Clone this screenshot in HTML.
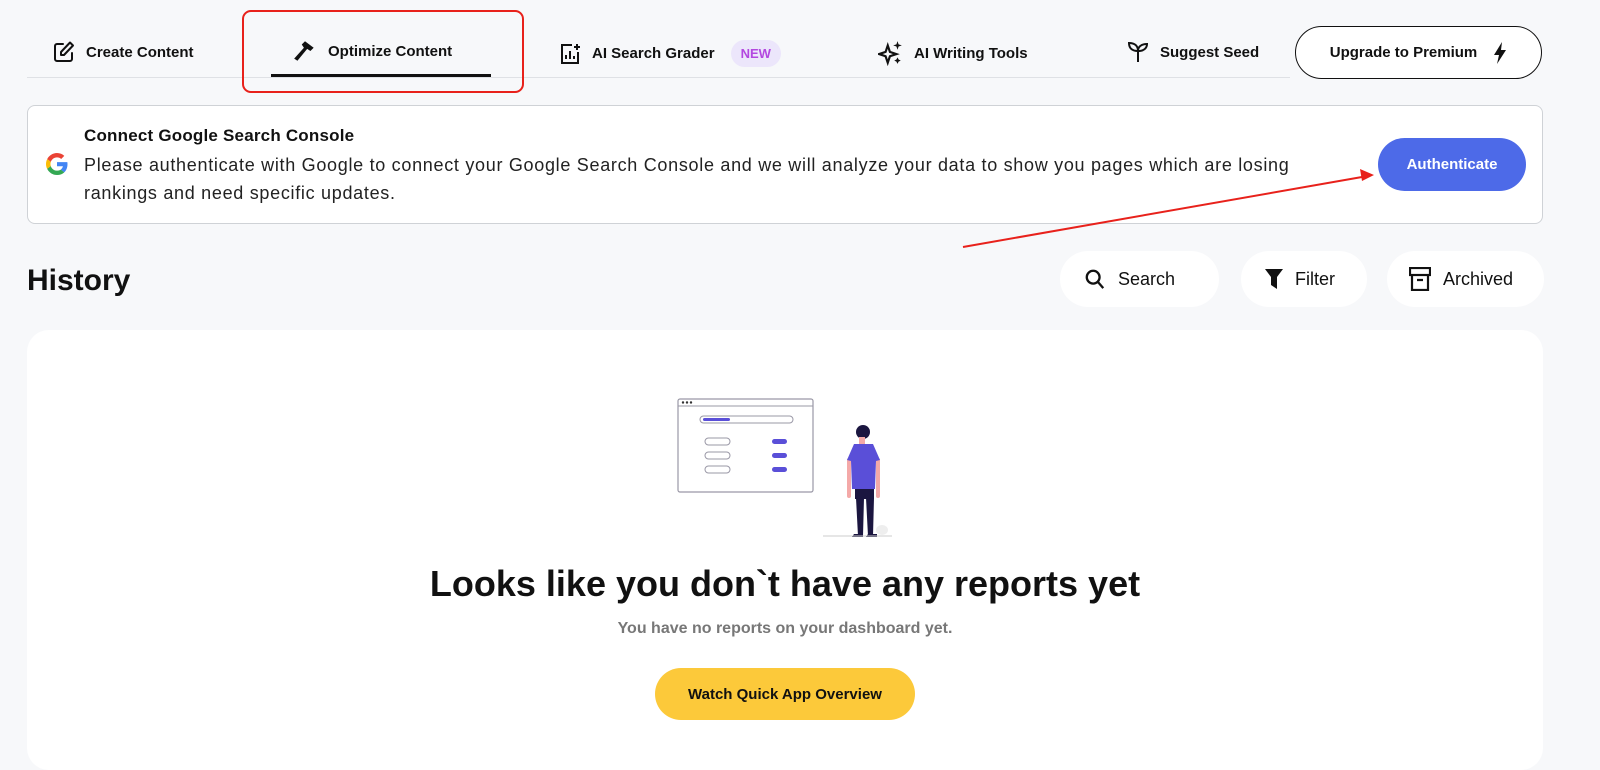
<!DOCTYPE html>
<html><head><style>
*{box-sizing:border-box;margin:0;padding:0}
body{width:1600px;height:753px;background:#f7f8fa;font-family:"Liberation Sans",sans-serif;color:#111;position:relative;overflow:hidden}
.a{position:absolute}
.nav{font-size:15px;font-weight:bold;display:flex;align-items:center;gap:10px}
.pill{background:#fff;border-radius:28px;height:56px;display:flex;align-items:center;gap:12px;font-size:18px;padding:0 24px}
</style></head><body>
<div class="a" style="left:27px;top:77px;width:1263px;height:1px;background:#dfe1e5"></div>
<div class="a nav" style="left:52px;top:40px"><svg width="24" height="24" viewBox="0 0 24 24" fill="none" stroke="#111" stroke-width="2" stroke-linecap="round" stroke-linejoin="round"><path d="M11 4H5a2 2 0 0 0-2 2v13a2 2 0 0 0 2 2h13a2 2 0 0 0 2-2v-6"/><path d="M18 2.5l3 3L12 15H9v-3z"/></svg>Create Content</div>
<div class="a nav" style="left:292px;top:38px"><svg width="26" height="26" viewBox="0 0 24 24"><path d="M12 3l8 6-3 3-3-2-9 11-3-2 9-10-2-3z" fill="#111"/></svg>Optimize Content</div>
<div class="a" style="left:271px;top:74px;width:220px;height:3px;background:#111"></div>
<div class="a" style="left:242px;top:10px;width:282px;height:83px;border:2px solid #e8211b;border-radius:9px"></div>
<div class="a nav" style="left:558px;top:40px"><svg width="24" height="24" viewBox="0 0 24 24" fill="none" stroke="#111" stroke-width="2"><path d="M14 3H4v18h16V10"/><path d="M8 17v-4M12 17V9M16 17v-3M19 2v6M16 5h6"/></svg>AI Search Grader<span style="background:#ece6fb;color:#b347e0;border-radius:14px;padding:6px 10px;font-size:13px;margin-left:6px">NEW</span></div>
<div class="a nav" style="left:878px;top:40px"><svg width="26" height="26" viewBox="0 0 24 24" fill="#111"><path d="M9 5l2 6 6 2-6 2-2 6-2-6-6-2 6-2z" fill="none" stroke="#111" stroke-width="2"/><path d="M18 1l1 3 3 1-3 1-1 3-1-3-3-1 3-1zM18 16l1 2 2 1-2 1-1 2-1-2-2-1 2-1z"/></svg>AI Writing Tools</div>
<div class="a nav" style="left:1126px;top:40px"><svg width="24" height="24" viewBox="0 0 24 24" fill="none" stroke="#111" stroke-width="2"><path d="M12 22V11M12 11C12 6 9 3 3 3c0 5 3 8 9 8zM12 11c0-4 3-7 9-7 0 4-3 7-9 7"/></svg>Suggest Seed</div>
<div class="a" style="left:1295px;top:26px;width:247px;height:53px;border:1.5px solid #111;border-radius:27px;background:#fff;display:flex;align-items:center;justify-content:center;gap:16px;font-size:15px;font-weight:bold">Upgrade to Premium<svg width="14" height="22" viewBox="0 0 14 22"><path d="M9 0L1 13h5l-2 9 9-14H8z" fill="#111"/></svg></div>

<div class="a" style="left:27px;top:105px;width:1516px;height:119px;background:#fff;border:1px solid #cfd2d6;border-radius:8px"></div>
<div class="a" style="left:46px;top:153px"><svg width="22" height="22" viewBox="0 0 48 48"><path fill="#EA4335" d="M24 9.5c3.5 0 6.6 1.2 9.1 3.6l6.8-6.8C35.8 2.4 30.3 0 24 0 14.6 0 6.6 5.4 2.6 13.3l7.9 6.1C12.4 13.7 17.7 9.5 24 9.5z"/><path fill="#4285F4" d="M46.9 24.5c0-1.6-.1-3.1-.4-4.5H24v9h12.9c-.6 3-2.3 5.5-4.8 7.2l7.7 6c4.5-4.2 7.1-10.3 7.1-17.7z"/><path fill="#FBBC05" d="M10.5 28.6c-.5-1.5-.8-3-.8-4.6s.3-3.1.8-4.6l-7.9-6.1C.9 16.6 0 20.2 0 24s.9 7.4 2.6 10.7z"/><path fill="#34A853" d="M24 48c6.5 0 11.9-2.1 15.9-5.8l-7.7-6c-2.2 1.5-5 2.3-8.2 2.3-6.3 0-11.6-4.2-13.5-10l-7.9 6.1C6.6 42.6 14.6 48 24 48z"/></svg></div>
<div class="a" style="left:84px;top:126px;font-size:17px;font-weight:bold;letter-spacing:0.2px">Connect Google Search Console</div>
<div class="a" style="left:84px;top:151px;font-size:18px;line-height:28px;color:#222;letter-spacing:0.7px;white-space:nowrap">Please authenticate with Google to connect your Google Search Console and we will analyze your data to show you pages which are losing<br>rankings and need specific updates.</div>
<div class="a" style="left:1378px;top:138px;width:148px;height:53px;border-radius:27px;background:#4d6ae8;color:#fff;font-weight:bold;font-size:15px;display:flex;align-items:center;justify-content:center">Authenticate</div>
<svg class="a" style="left:0;top:0" width="1600" height="753"><line x1="963" y1="247" x2="1362" y2="177" stroke="#e8211b" stroke-width="2"/><path d="M1374 175l-14-6 2 12z" fill="#e8211b"/></svg>

<div class="a" style="left:27px;top:264px;font-size:30px;font-weight:bold">History</div>
<div class="a pill" style="left:1060px;top:251px;width:159px"><svg width="22" height="22" viewBox="0 0 24 24" fill="none" stroke="#111" stroke-width="2.5"><circle cx="10" cy="10" r="7"/><path d="M15 15l6 7"/></svg>Search</div>
<div class="a pill" style="left:1241px;top:251px;width:126px"><svg width="18" height="20" viewBox="0 0 18 20"><path d="M0 0h18l-6 8v12l-6-4V8z" fill="#111"/></svg>Filter</div>
<div class="a pill" style="left:1387px;top:251px;width:157px;padding-left:22px"><svg width="22" height="24" viewBox="0 0 22 24" fill="none" stroke="#111" stroke-width="2.2"><rect x="1" y="1" width="20" height="7"/><path d="M3 8v15h16V8M8 13h6"/></svg>Archived</div>

<div class="a" style="left:27px;top:330px;width:1516px;height:440px;background:#fff;border-radius:22px"></div>
<svg class="a" style="left:660px;top:390px" width="250" height="160" viewBox="0 0 250 160">
<rect x="18" y="9" width="135" height="93" rx="2" fill="#fff" stroke="#9a98a6" stroke-width="1.2"/>
<line x1="18" y1="16" x2="153" y2="16" stroke="#9a98a6"/>
<circle cx="23" cy="12.5" r="1.2" fill="#333"/><circle cx="27" cy="12.5" r="1.2" fill="#333"/><circle cx="31" cy="12.5" r="1.2" fill="#333"/>
<rect x="40" y="26" width="93" height="7" rx="3.5" fill="#fff" stroke="#9a98a6"/><rect x="43" y="28" width="27" height="3" rx="1.5" fill="#5a4fd8"/>
<g fill="#fff" stroke="#9a98a6"><rect x="45" y="48" width="25" height="7" rx="3.5"/><rect x="45" y="62" width="25" height="7" rx="3.5"/><rect x="45" y="76" width="25" height="7" rx="3.5"/></g>
<g fill="#5a4fd8"><rect x="112" y="49" width="15" height="5" rx="2.5"/><rect x="112" y="63" width="15" height="5" rx="2.5"/><rect x="112" y="77" width="15" height="5" rx="2.5"/></g>
<g transform="translate(10,0)">
<circle cx="193" cy="42" r="7" fill="#1b1640"/><rect x="189" y="47" width="6" height="9" fill="#f4a9a8"/>
<rect x="177" y="68" width="4" height="40" rx="2" fill="#f4a9a8"/><rect x="206" y="68" width="4" height="40" rx="2" fill="#f4a9a8"/>
<path d="M184 54h19l7 16-4 1-1 28h-23l-1-28-4-1z" fill="#5a4fd8"/>
<rect x="185" y="99" width="19" height="10" fill="#1b1640"/><path d="M186 108h8l-1 38h-5zM196 108h8l-1 38h-5z" fill="#1b1640"/>
<path d="M184 144h9v3h-11zM198 144h9v3h-11z" fill="#1b1640"/>
</g>
<line x1="163" y1="146" x2="232" y2="146" stroke="#ccc"/><ellipse cx="222" cy="140" rx="6" ry="5" fill="#eee"/>
</svg>
<div class="a" style="left:0;width:1570px;top:563px;text-align:center;font-size:36px;font-weight:bold">Looks like you don`t have any reports yet</div>
<div class="a" style="left:0;width:1570px;top:620px;text-align:center;font-size:16px;font-weight:bold;color:#777">You have no reports on your dashboard yet.</div>
<div class="a" style="left:655px;top:668px;width:260px;height:52px;border-radius:26px;background:#fcc93a;font-size:15px;font-weight:bold;display:flex;align-items:center;justify-content:center">Watch Quick App Overview</div>
</body></html>
